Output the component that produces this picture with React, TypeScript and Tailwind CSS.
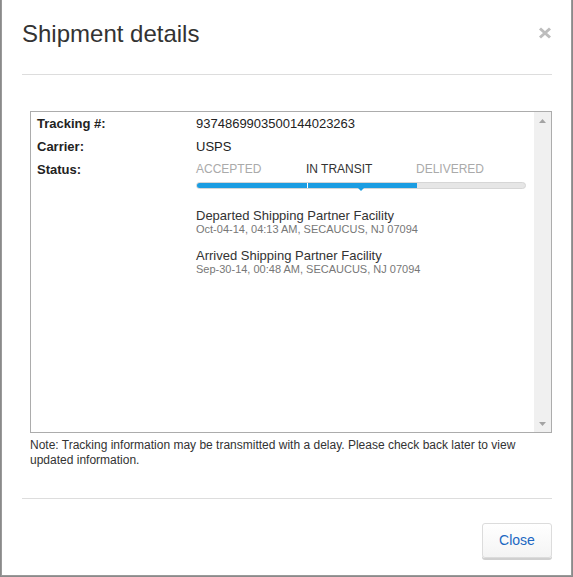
import React from 'react'

const events = [
  { title: 'Departed Shipping Partner Facility', detail: 'Oct-04-14, 04:13 AM, SECAUCUS, NJ 07094' },
  { title: 'Arrived Shipping Partner Facility', detail: 'Sep-30-14, 00:48 AM, SECAUCUS, NJ 07094' },
]

const steps = [
  { label: 'ACCEPTED', active: false },
  { label: 'IN TRANSIT', active: true },
  { label: 'DELIVERED', active: false },
]

function ProgressTrack() {
  return (
    <div className="relative mt-[1px] h-[7px] w-[330px] rounded-full border border-[#d6d6d6] bg-[#e6e6e6]">
      <div className="absolute left-0 top-0 flex h-[5px] w-[220px] overflow-hidden rounded-l-full">
        <div className="h-full w-[110px] bg-[#1b9de2]" />
        <div className="h-full w-[1px] bg-white" />
        <div className="h-full flex-1 bg-[#1b9de2]" />
      </div>
      {/* marker under the current step */}
      <svg className="absolute left-[159px] top-[3px]" width="10" height="6" viewBox="0 0 10 6">
        <polygon points="0,0 10,0 5,5" fill="#1b9de2" />
      </svg>
    </div>
  )
}

export default function App() {
  return (
    <div
      className="h-[577px] w-[573px] bg-[#8a8a8a] pl-[1px]"
      style={{ fontFamily: '"Liberation Sans", Arial, sans-serif' }}
    >
      <div className="h-[576px] w-[571px] border-x border-b border-[#9a9a9a] bg-white pl-[20px] pr-[19px]">
        {/* header */}
        <div className="flex h-[75px] items-start justify-between border-b border-[#dddddd] pt-[21px]">
          <h1 className="text-[24px] leading-[26px] text-[#333333]">Shipment details</h1>
          <svg className="mt-[6px]" width="14" height="12" viewBox="0 0 14 12">
            <path d="M2 1.5L12 10.5M12 1.5L2 10.5" stroke="#bdbdbd" strokeWidth="3" />
          </svg>
        </div>

        {/* body */}
        <div className="ml-[8px] mt-[36px] flex h-[322px] w-[522px] border border-[#acacac]">
          <div className="flex-1 pl-[6px] text-[13px] leading-[23px] text-[#222222]">
            <div className="flex">
              <div className="w-[159px] font-bold">Tracking #:</div>
              <div>9374869903500144023263</div>
            </div>
            <div className="flex">
              <div className="w-[159px] font-bold">Carrier:</div>
              <div>USPS</div>
            </div>
            <div className="flex">
              <div className="w-[159px] font-bold">Status:</div>
              <div>
                <div className="flex text-[12px]">
                  {steps.map((s) => (
                    <div key={s.label} className={s.active ? 'w-[110px] text-[#333333]' : 'w-[110px] text-[#aaaaaa]'}>
                      {s.label}
                    </div>
                  ))}
                </div>
                <ProgressTrack />
                <div className="mt-[20px] flex flex-col gap-[14px]">
                  {events.map((e) => (
                    <div key={e.title}>
                      <div className="text-[13px] leading-[14px] text-[#333333]">{e.title}</div>
                      <div className="text-[11px] leading-[12px] text-[#777777]">{e.detail}</div>
                    </div>
                  ))}
                </div>
              </div>
            </div>
          </div>
          <div className="flex w-[17px] flex-col items-center justify-between bg-[#f0f0f0] pb-[6px] pt-[7px]">
            <svg width="7" height="4" viewBox="0 0 7 4">
              <polygon points="3.5,0 7,4 0,4" fill="#a3a3a3" />
            </svg>
            <svg width="7" height="4" viewBox="0 0 7 4">
              <polygon points="0,0 7,0 3.5,4" fill="#a3a3a3" />
            </svg>
          </div>
        </div>
        <p className="ml-[8px] mt-[5px] text-[12px] leading-[15px] text-[#333333]">
          Note: Tracking information may be transmitted with a delay. Please check back later to view updated
          information.
        </p>

        {/* footer */}
        <div className="mt-[30px] flex justify-end border-t border-[#dddddd] pt-[24px]">
          <button className="h-[35px] w-[70px] rounded-[3px] border border-[#dcdcdc] bg-gradient-to-b from-white to-[#f4f4f4] text-[14px] text-[#2067c2] shadow-[0_2px_0_#d0d0d0]">
            Close
          </button>
        </div>
      </div>
    </div>
  )
}
